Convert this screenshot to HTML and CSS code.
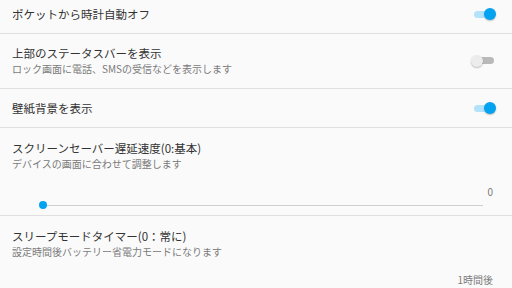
FILE: index.html
```html
<!DOCTYPE html>
<html lang="ja">
<head>
<meta charset="utf-8">
<link rel="stylesheet" href="styles.css">
</head>
<body>
<div class="list">
  <div class="row simple">
    <div class="text"><div class="title">ポケットから時計自動オフ</div></div>
    <div class="switch on"><span class="track"></span><span class="thumb"></span></div>
  </div>
  <div class="row">
    <div class="text">
      <div class="title">上部のステータスバーを表示</div>
      <div class="summary">ロック画面に電話、SMSの受信などを表示します</div>
    </div>
    <div class="switch off"><span class="track"></span><span class="thumb"></span></div>
  </div>
  <div class="row simple">
    <div class="text"><div class="title">壁紙背景を表示</div></div>
    <div class="switch on"><span class="track"></span><span class="thumb"></span></div>
  </div>
  <div class="row block">
    <div class="title">スクリーンセーバー遅延速度(0:基本)</div>
    <div class="summary">デバイスの画面に合わせて調整します</div>
    <div class="value">0</div>
    <div class="slider"><span class="knob"></span><span class="line"></span></div>
  </div>
  <div class="row block last">
    <div class="title">スリープモードタイマー(0：常に)</div>
    <div class="summary">設定時間後バッテリー省電力モードになります</div>
    <div class="value">1時間後</div>
  </div>
</div>
</body>
</html>
```
FILE: styles.css
```css
html, body {
  margin: 0;
  padding: 0;
  background: #fafafa;
  overflow: hidden;
  height: 288px;
}
body {
  font-family: "Noto Sans CJK JP", "Noto Sans", sans-serif;
}
.list {
  margin-top: -5px;
}
.row {
  display: flex;
  align-items: center;
  padding: 11px 15px 12px 12px;
  border-bottom: 1px solid #e0e0e0;
}
.row.simple {
  height: 39px;
  padding-top: 0;
  padding-bottom: 0;
  box-sizing: border-box;
}
.text {
  flex: 1;
}
.title {
  font-size: 11.5px;
  line-height: 16px;
  color: #333333;
}
.summary {
  font-size: 10px;
  line-height: 14px;
  color: #7a7a7a;
  margin-top: 1px;
}
.switch {
  position: relative;
  width: 26px;
  height: 14px;
}
.switch .track {
  position: absolute;
  left: 3px;
  right: 3px;
  top: 3.5px;
  height: 7px;
  border-radius: 4px;
  background: #b3e2fb;
}
.switch .thumb {
  position: absolute;
  top: 1px;
  width: 12px;
  height: 12px;
  border-radius: 50%;
  background: #03a3f1;
  box-shadow: 0 1px 1.5px rgba(0,0,0,0.25);
}
.switch.on .thumb { right: 1px; }
.switch.off .thumb { left: 0; background: #ececec; }
.switch.off .track { background: #b9b9b9; }
.block {
  display: block;
  padding-top: 12px;
  padding-bottom: 5px;
}
.block.last {
  border-bottom: none;
  padding-bottom: 0;
}
.value {
  font-size: 10px;
  line-height: 14px;
  color: #7a7a7a;
  text-align: right;
  margin-top: 14px;
  padding-right: 4px;
}
.slider {
  display: flex;
  align-items: center;
  height: 10px;
  margin: 1px 14px 0 27px;
}
.knob {
  width: 8px;
  height: 8px;
  border-radius: 50%;
  background: #03a3f1;
  flex: none;
}
.line {
  flex: 1;
  height: 1px;
  background: #cfcfcf;
}
```
